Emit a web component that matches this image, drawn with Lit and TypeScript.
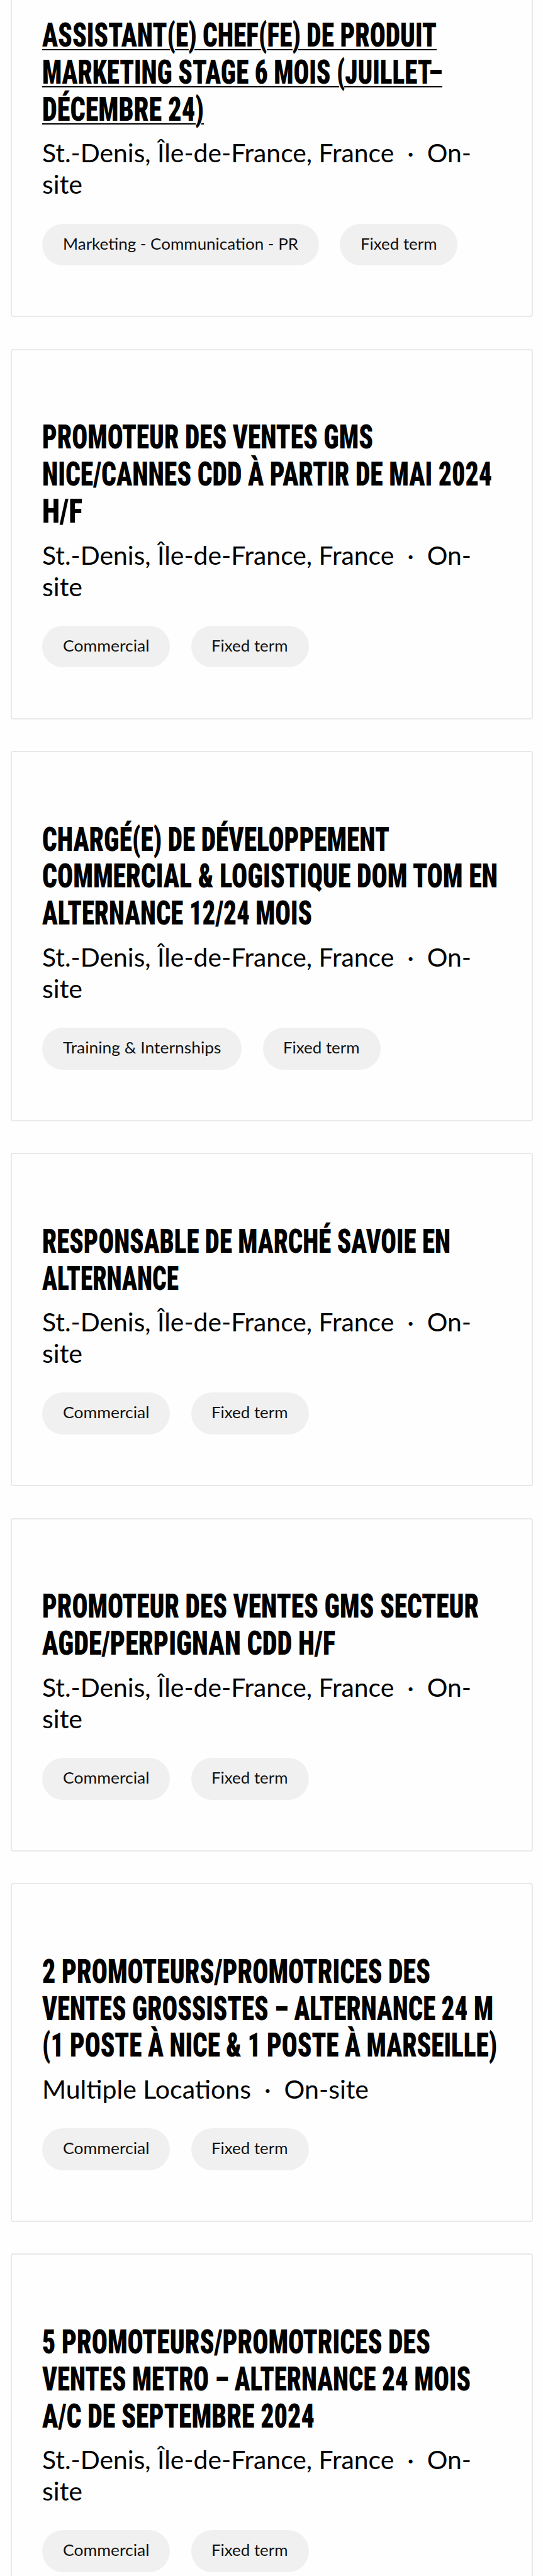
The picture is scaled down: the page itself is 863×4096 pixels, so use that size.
import { LitElement, html, css } from 'lit';
import { customElement, property } from 'lit/decorators.js';

interface Line {
    text: string;
    width: number;
}

interface Job {
    title: Line[];
    location: Line[];
    tags: Line[];
    active?: boolean;
}

const ST_DENIS: Line[] = [
    { text: 'St.-Denis, Île-de-France, France\u00a0 ·\u00a0 On-', width: 682 },
    { text: 'site', width: 64 },
];

const COMMERCIAL: Line = { text: 'Commercial', width: 137.5 };
const FIXED_TERM: Line = { text: 'Fixed term', width: 121.5 };

const JOBS: Job[] = [
    {
        active: true,
        title: [
            { text: 'ASSISTANT(E) CHEF(FE) DE PRODUIT', width: 627 },
            { text: 'MARKETING STAGE 6 MOIS (JUILLET–', width: 636 },
            { text: 'DÉCEMBRE 24)', width: 257 },
        ],
        location: ST_DENIS,
        tags: [{ text: 'Marketing - Communication - PR', width: 374 }, FIXED_TERM],
    },
    {
        title: [
            { text: 'PROMOTEUR DES VENTES GMS', width: 526 },
            { text: 'NICE/CANNES CDD À PARTIR DE MAI 2024', width: 715 },
            { text: 'H/F', width: 64 },
        ],
        location: ST_DENIS,
        tags: [COMMERCIAL, FIXED_TERM],
    },
    {
        title: [
            { text: 'CHARGÉ(E) DE DÉVELOPPEMENT', width: 552 },
            { text: 'COMMERCIAL & LOGISTIQUE DOM TOM EN', width: 724 },
            { text: 'ALTERNANCE 12/24 MOIS', width: 429 },
        ],
        location: ST_DENIS,
        tags: [{ text: 'Training & Internships', width: 251.5 }, FIXED_TERM],
    },
    {
        title: [
            { text: 'RESPONSABLE DE MARCHÉ SAVOIE EN', width: 649 },
            { text: 'ALTERNANCE', width: 217 },
        ],
        location: ST_DENIS,
        tags: [COMMERCIAL, FIXED_TERM],
    },
    {
        title: [
            { text: 'PROMOTEUR DES VENTES GMS SECTEUR', width: 694 },
            { text: 'AGDE/PERPIGNAN CDD H/F', width: 466 },
        ],
        location: ST_DENIS,
        tags: [COMMERCIAL, FIXED_TERM],
    },
    {
        title: [
            { text: '2 PROMOTEURS/PROMOTRICES DES', width: 617 },
            { text: 'VENTES GROSSISTES – ALTERNANCE 24 M', width: 717 },
            { text: '(1 POSTE À NICE & 1 POSTE À MARSEILLE)', width: 723 },
        ],
        location: [{ text: 'Multiple Locations\u00a0 ·\u00a0 On-site', width: 519 }],
        tags: [COMMERCIAL, FIXED_TERM],
    },
    {
        title: [
            { text: '5 PROMOTEURS/PROMOTRICES DES', width: 617 },
            { text: 'VENTES METRO – ALTERNANCE 24 MOIS', width: 681 },
            { text: 'A/C DE SEPTEMBRE 2024', width: 433 },
        ],
        location: ST_DENIS,
        tags: [COMMERCIAL, FIXED_TERM],
    },
];

// One line of text, condensed or stretched to the given width
@customElement('fit-line')
export class FitLine extends LitElement {
    @property({ type: String }) text = '';
    @property({ type: Number }) width = 0;

    static styles = css`
    :host {
      display: block;
      white-space: nowrap;
    }

    .text {
      display: inline-block;
      vertical-align: top;
      transform-origin: 0 0;
      text-decoration: var(--line-decoration, none);
      text-decoration-thickness: 2px;
      text-underline-offset: 4px;
    }
  `;

    firstUpdated() {
        const el = this.renderRoot.querySelector('.text') as HTMLElement;
        const natural = el.getBoundingClientRect().width;
        el.style.transform = `scaleX(${this.width / natural})`;
        this.style.width = `${this.width}px`;
    }

    render() {
        return html`<span class="text">${this.text}</span>`;
    }
}

@customElement('job-card')
export class JobCard extends LitElement {
    @property({ attribute: false }) job!: Job;

    static styles = css`
    :host {
      display: block;
      box-sizing: border-box;
      padding: 109.6px 0 80.2px 48.6px;
      border: 2px solid #e9e9e9;
      border-radius: 4px;
      background: #fefefe;
      overflow: hidden;
    }

    .title {
      margin: 0;
      font-family: Roboto, sans-serif;
      font-size: 54px;
      font-weight: 900;
      font-stretch: 75%;
      line-height: 58.9px;
      color: #000;
    }

    .title.active {
      --line-decoration: underline;
    }

    .location {
      margin-top: 14.7px;
      font-family: Lato, sans-serif;
      font-size: 41px;
      line-height: 49.9px;
      color: #000;
    }

    .tags {
      display: flex;
      gap: 33.4px;
      margin-top: 37.3px;
    }

    .tag {
      box-sizing: border-box;
      height: 66.7px;
      padding: 0 32.8px;
      border-radius: 34px;
      background: #f0f0f0;
      font-family: Lato, sans-serif;
      font-size: 25px;
      line-height: 62.4px;
      color: #111;
    }
  `;

    line(l: Line) {
        return html`<fit-line .text=${l.text} .width=${l.width}></fit-line>`;
    }

    render() {
        const { title, location, tags, active } = this.job;
        return html`
      <h3 class="title ${active ? 'active' : ''}">${title.map((l) => this.line(l))}</h3>
      <div class="location">${location.map((l) => this.line(l))}</div>
      <div class="tags">
        ${tags.map((t) => html`<div class="tag">${this.line(t)}</div>`)}
      </div>
    `;
    }
}

@customElement('app-root')
export class AppRoot extends LitElement {
    static styles = css`
    :host {
      display: flow-root;
      height: 4096px;
      overflow: hidden;
      background: #fefefe;
    }

    .list {
      display: flex;
      flex-direction: column;
      gap: 50.3px;
      margin-top: -84.6px;
      padding: 0 16.5px;
    }
  `;

    render() {
        return html`
      <div class="list">
        ${JOBS.map((job) => html`<job-card .job=${job}></job-card>`)}
      </div>
    `;
    }
}
